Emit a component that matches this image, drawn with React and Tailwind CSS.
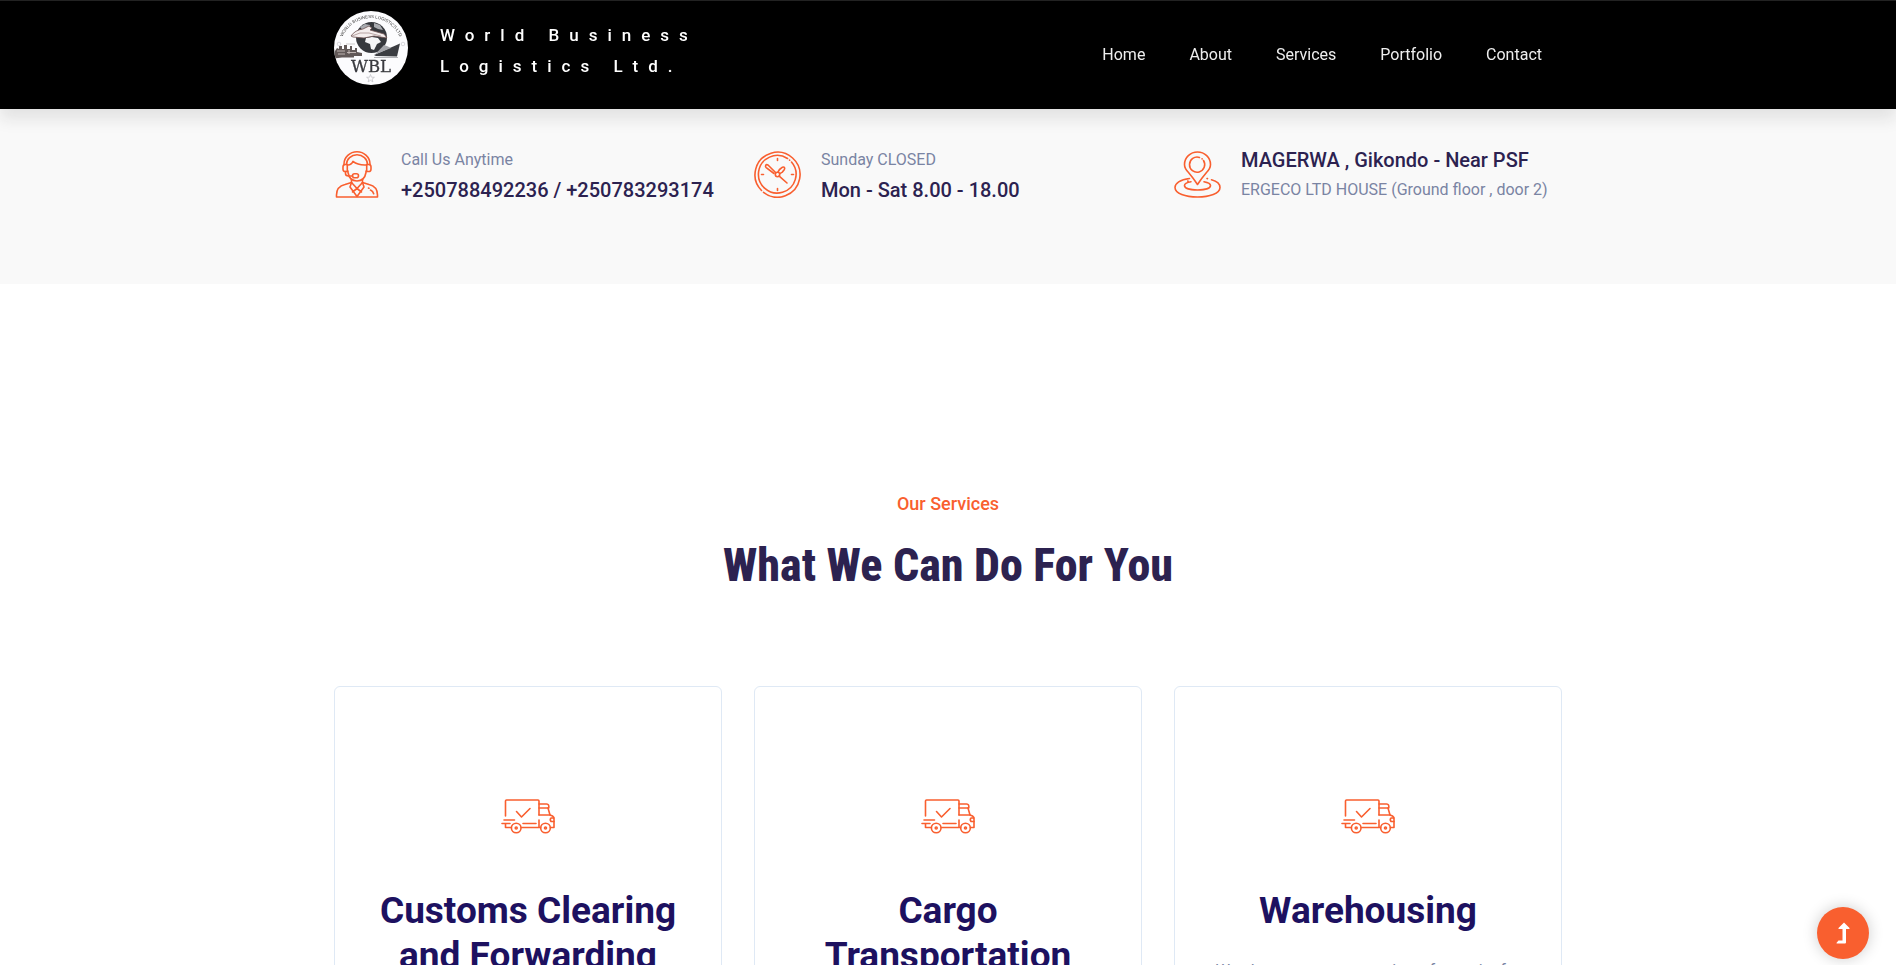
import React from "react";

const NAV = ["Home", "About", "Services", "Portfolio", "Contact"];

const SERVICES = [
  {
    title: "Customs Clearing and Forwarding",
    text: "Smooth customs procedures and forwarding at every border.",
  },
  {
    title: "Cargo Transportation",
    text: "Reliable road, air and sea transportation for your cargo.",
  },
  {
    title: "Warehousing",
    text: "We also run secure, spacious, fast units for your goods.",
  },
];

function Logo() {
  return (
    <svg viewBox="0 0 74 74" className="size-[74px] shrink-0" role="img" aria-label="WBL logo">
      <defs>
        <path id="logo-arc" d="M6 38 A31 31 0 0 1 68 38" />
        <clipPath id="logo-clip">
          <circle cx="37" cy="37" r="37" />
        </clipPath>
      </defs>
      <circle cx="37" cy="37" r="37" fill="#fcfcfe" />
      <g clipPath="url(#logo-clip)">
        <text fontSize="4.3" fontFamily="Liberation Sans, sans-serif" fill="#333">
          <textPath href="#logo-arc" startOffset="50%" textAnchor="middle">
            WORLD BUSINESS LOGISTICS LTD
          </textPath>
        </text>
        <circle cx="37.500" cy="26.500" r="15.500" fill="#36383d" />
        <path d="M26 16 l5-3 5 1 -1 4 -5 3z M40 12 l6 2 3 5 -5-1 -4-2z" fill="#a9abb0" />
        <path d="M32 27 l6-1 6 1 3 4 -4 2 -3 6 -3-1 -1-5 -5-2z" fill="#f4f4f6" />
        <path d="M17 25 q4-6 12-7 l6-3 3 2 -2 2 14 4 3 4 -13-2 -10 2 -11-1z" fill="#f5eeee" stroke="#6d5252" strokeWidth=".8" />
        <path d="M18 25 l8-3 9 0 12 3" fill="none" stroke="#9e8585" strokeWidth=".7" />
        <path d="M1 40 l2-3 2 1 v-3 h3 v3 h2 v-4 h3 v4 h3 v-3 h2 v4 h3 v-2 h2 v4 l5 1 v3 h-8 v1.500 h-12 l-8 1z" fill="#625958" />
        <path d="M3 40 h8 M13 41.500 h9 M4 43 h7 M15 39 v4" stroke="#c9bebc" strokeWidth=".9" />
        <path d="M12 33 h9" stroke="#b9b4b6" strokeWidth=".7" />
        <path d="M40 44 L66 32.500 L63 45.500 L42 45z" fill="#3b3d42" />
        <path d="M50 34 L53 35 L57 37 L41 43.500 z" fill="#a4a5aa" />
        <path d="M40 46.500 h24" stroke="#a0a1a6" strokeWidth=".8" />
        <circle cx="5" cy="33" r="1.800" fill="none" stroke="#c9c9ce" strokeWidth=".7" />
        <circle cx="69" cy="33" r="1.800" fill="none" stroke="#c9c9ce" strokeWidth=".7" />
        <text x="37" y="60.500" textAnchor="middle" fontSize="16.500" fontWeight="400" fontFamily="DejaVu Serif, serif" fill="#3a3b40" stroke="#3a3b40" strokeWidth=".3">
          WBL
        </text>
        <path d="M36.500 63.500 l1 2.700 2.900 .1 -2.300 1.800 .8 2.800 -2.400-1.600 -2.400 1.600 .8-2.800 -2.300-1.800 2.900-.1z" fill="none" stroke="#bdbdc3" strokeWidth=".7" />
      </g>
    </svg>
  );
}

const iconProps = {
  fill: "none",
  stroke: "#f95f2f",
  strokeWidth: 1.6,
  strokeLinecap: "round",
  strokeLinejoin: "round",
  "aria-hidden": true,
};

function SupportIcon() {
  return (
    <svg viewBox="0 0 47 47" className="size-[47px] shrink-0" {...iconProps}>
      <path d="M10 13.500 V13 a13 12.200 0 0 1 26 0 v.5" />
      <path d="M12.500 13.500 a10.500 9.700 0 0 1 21 0" />
      <path d="M13.300 13.500 h-2 q-2.300 0-2.300 2.300 v2.400 q0 2.300 2.300 2.300 h2z M32.700 13.500 h2 q2.300 0 2.300 2.300 v2.400 q0 2.300-2.300 2.300 h-2z" />
      <path d="M14 14 q3.300 0 5-3.600 q5 4 13 3.600" />
      <path d="M14 20 v1.500 q1.500 8.500 9 8.500 q7.500 0 9-8.500 V20" />
      <path d="M11.500 20.500 v2 q0 2.500 3 2.500 h4" />
      <rect x="18.500" y="22.700" width="6" height="4" rx="2" />
      <path d="M17.500 28.500 v3.500 M28.500 28.500 v3.500" />
      <path d="M2.500 46 v-2 q0-8.500 8.500-10.500 l6.500-2 L23 37.500 l5.500-6 6.500 2 q8.500 2 8.500 10.500 v2z" />
      <path d="M17.500 31.500 l-1.500 4.500 7 9.500 7-9.500 -1.500-4.500 M23 37.500 l-4.500 3.500 M23 37.500 l4.500 3.500" />
      <path d="M34.500 37 l.5 .2 M36.500 39 q2.500 1.200 3.200 3.700" />
    </svg>
  );
}

function ClockIcon() {
  return (
    <svg viewBox="0 0 47 47" className="size-[47px] shrink-0" {...iconProps}>
      <path d="M7.500 39.500 A22.500 22.500 0 1 1 9.500 41.300" />
      <path d="M37.500 11 A18.800 18.800 0 1 1 33.500 7.500 M35.500 9 l.2 .2" />
      <path d="M23.500 7.500 v2 M23.500 37.500 v2 M7.500 23.500 h2 M37.500 23.500 h2" />
      <circle cx="23.500" cy="23.500" r="2.200" />
      <path d="M21.800 21.800 L14 14 q-1.700-.8-2.300 .3 q-.6 1.300 .5 2.300 L20 22.500" />
      <path d="M24 21 l1.500-2.500 3-2.300 q1.300-.6 1.900 .3 q.6 1 0 1.900 l-2 2.700 -2.600 1.500" />
      <path d="M25.200 25.200 L33 32" />
    </svg>
  );
}

function PinIcon() {
  return (
    <svg viewBox="0 0 47 47" className="size-[47px] shrink-0" {...iconProps}>
      <path d="M23.500 33.500 Q20 28 14.500 21.500 Q10.500 17.500 10.500 13.500 a13 12.500 0 0 1 26 0 Q36.500 17.500 32.500 21.500 Q27 28 23.500 33.500z" />
      <path d="M29.500 9.500 A7.600 7.600 0 1 1 25.500 6.400 M28 7.800 l.2 .1" />
      <path d="M15.500 27.500 C6 28.500 1 32.500 1 36.500 C1 42.500 11.500 46 23.500 46 S46 42.500 46 36.500 C46 32.500 42 30 37.500 28.800 M33 27.500 l.5 .1" />
      <path d="M17 30.700 C12.500 31.500 10.500 33 10.500 34.500 C10.500 37.300 16 39 23.500 39 S36.500 37.300 36.500 34.500 C36.500 33 34 31.500 30 30.700 M14 30 l-.3 .1" />
    </svg>
  );
}

function TruckIcon() {
  return (
    <svg viewBox="0 0 54 36" className="h-9 w-[54px]" {...iconProps}>
      <path d="M4.500 17 V2 q0-1 1-1 H37 q1 0 1 1 V16" />
      <path d="M38 21 v7" />
      <path d="M15.500 12.500 l5 5.500 8.500-8.500" />
      <path d="M3 21 h10.500 M1 24.500 h8" />
      <path d="M4.500 25 v3.500 h5.500" />
      <path d="M20.500 28.500 h19 M22 24.500 h13" />
      <circle cx="15.200" cy="29" r="4.800" />
      <circle cx="15.200" cy="29" r="1" />
      <circle cx="44.500" cy="29" r="4.800" />
      <circle cx="44.500" cy="29" r="1" />
      <path d="M38 5 h7.500 q2 0 2.300 2 v2 H38" />
      <path d="M47 9 l2 7 H38" />
      <path d="M49 16 l2.500 1 q1.500 1 1.500 3 v8.500 h-3.500" />
      <path d="M53 19 h-3 q-1.500 1.500 0 3.500 h3" />
    </svg>
  );
}

const strong = "text-[20px] font-medium leading-[30px] text-[#2c2250]";
const muted = "text-[16px] font-normal leading-[30px] text-[#7a84a3]";

export default function App() {
  return (
    <div className="h-screen overflow-x-hidden overflow-y-auto bg-white font-['Roboto',sans-serif] [scrollbar-width:none]">
      <header className="sticky top-0 z-10 border-t border-[#222] bg-black text-white shadow-[0_10px_15px_rgba(25,25,25,0.1)]">
        <div className="mx-auto flex h-[108px] max-w-[1260px] items-start justify-between px-4">
          <a href="#home" className="flex items-start gap-8 pt-[10px]">
            <Logo />
            <span className="pt-[9px] text-[17px] font-medium leading-[31px] tracking-[10px]">
              World Business
              <br />
              Logistics Ltd.
            </span>
          </a>
          <nav aria-label="Main" className="flex gap-11 pr-5 pt-[38px] text-[16px] font-normal leading-8 text-[#eee]">
            {NAV.map((item) => (
              <a key={item} href={"#" + item.toLowerCase()}>
                {item}
              </a>
            ))}
          </nav>
        </div>
      </header>

      <section id="contact" className="bg-[#f9f9f9]">
        <div className="mx-auto grid h-[175px] max-w-[1260px] grid-cols-3 items-start gap-8 px-4 pt-9">
          <div className="flex gap-5">
            <div className="pt-[6px]"><SupportIcon /></div>
            <div className="whitespace-nowrap">
              <p className={muted}>Call Us Anytime</p>
              <p className={strong}>+250788492236 / +250783293174</p>
            </div>
          </div>
          <div className="flex gap-5">
            <div className="pt-[6px]"><ClockIcon /></div>
            <div className="whitespace-nowrap">
              <p className={muted}>Sunday CLOSED</p>
              <p className={strong}>Mon - Sat 8.00 - 18.00</p>
            </div>
          </div>
          <div className="flex gap-5">
            <div className="pt-[6px]"><PinIcon /></div>
            <div className="whitespace-nowrap">
              <p className={strong}>MAGERWA , Gikondo - Near PSF</p>
              <p className={muted}>ERGECO LTD HOUSE (Ground floor , door 2)</p>
            </div>
          </div>
        </div>
      </section>

      <section id="services" className="mx-auto max-w-[1260px] px-4 pb-24 pt-[204px]">
        <div className="text-center">
          <p className="text-[18px] font-medium leading-8 text-[#f95f2f]">Our Services</p>
          <h2 className="mt-4 font-['Roboto_Condensed','Roboto',sans-serif] text-[46px] font-extrabold leading-[58px] text-[#2c2250]">
            What We Can Do For You
          </h2>
        </div>
        <div className="mt-[92px] grid grid-cols-3 gap-8">
          {SERVICES.map((s) => (
            <article
              key={s.title}
              className="flex flex-col items-center rounded-md border border-[#dfe9f5] px-8 pb-20 pt-28 text-center"
            >
              <TruckIcon />
              <h3 className="mt-[53px] text-[37px] font-bold leading-[45px] text-[#1d1160]">{s.title}</h3>
              <p className="mt-6 text-[16px] font-normal leading-7 text-[#7a84a3]">{s.text}</p>
            </article>
          ))}
        </div>
      </section>

      <button
        type="button"
        aria-label="Back to top"
        className="fixed bottom-[6px] right-[27px] z-20 flex size-[52px] items-center justify-center rounded-full bg-[#f95f2f] shadow-[0_0_15px_rgba(0,0,0,0.2)]"
      >
        <svg viewBox="0 0 14 22" className="h-[22px] w-[14px]" fill="#fff" aria-hidden="true">
          <path d="M8 0.500 L13.500 6 Q14 7 13 7 H10 V20.500 Q10 21.500 9 21.500 H1 Q0 21.500 .6 20.700 L2.500 18.500 H6.500 V7 H3 Q2 7 2.500 6z" />
        </svg>
      </button>
    </div>
  );
}
